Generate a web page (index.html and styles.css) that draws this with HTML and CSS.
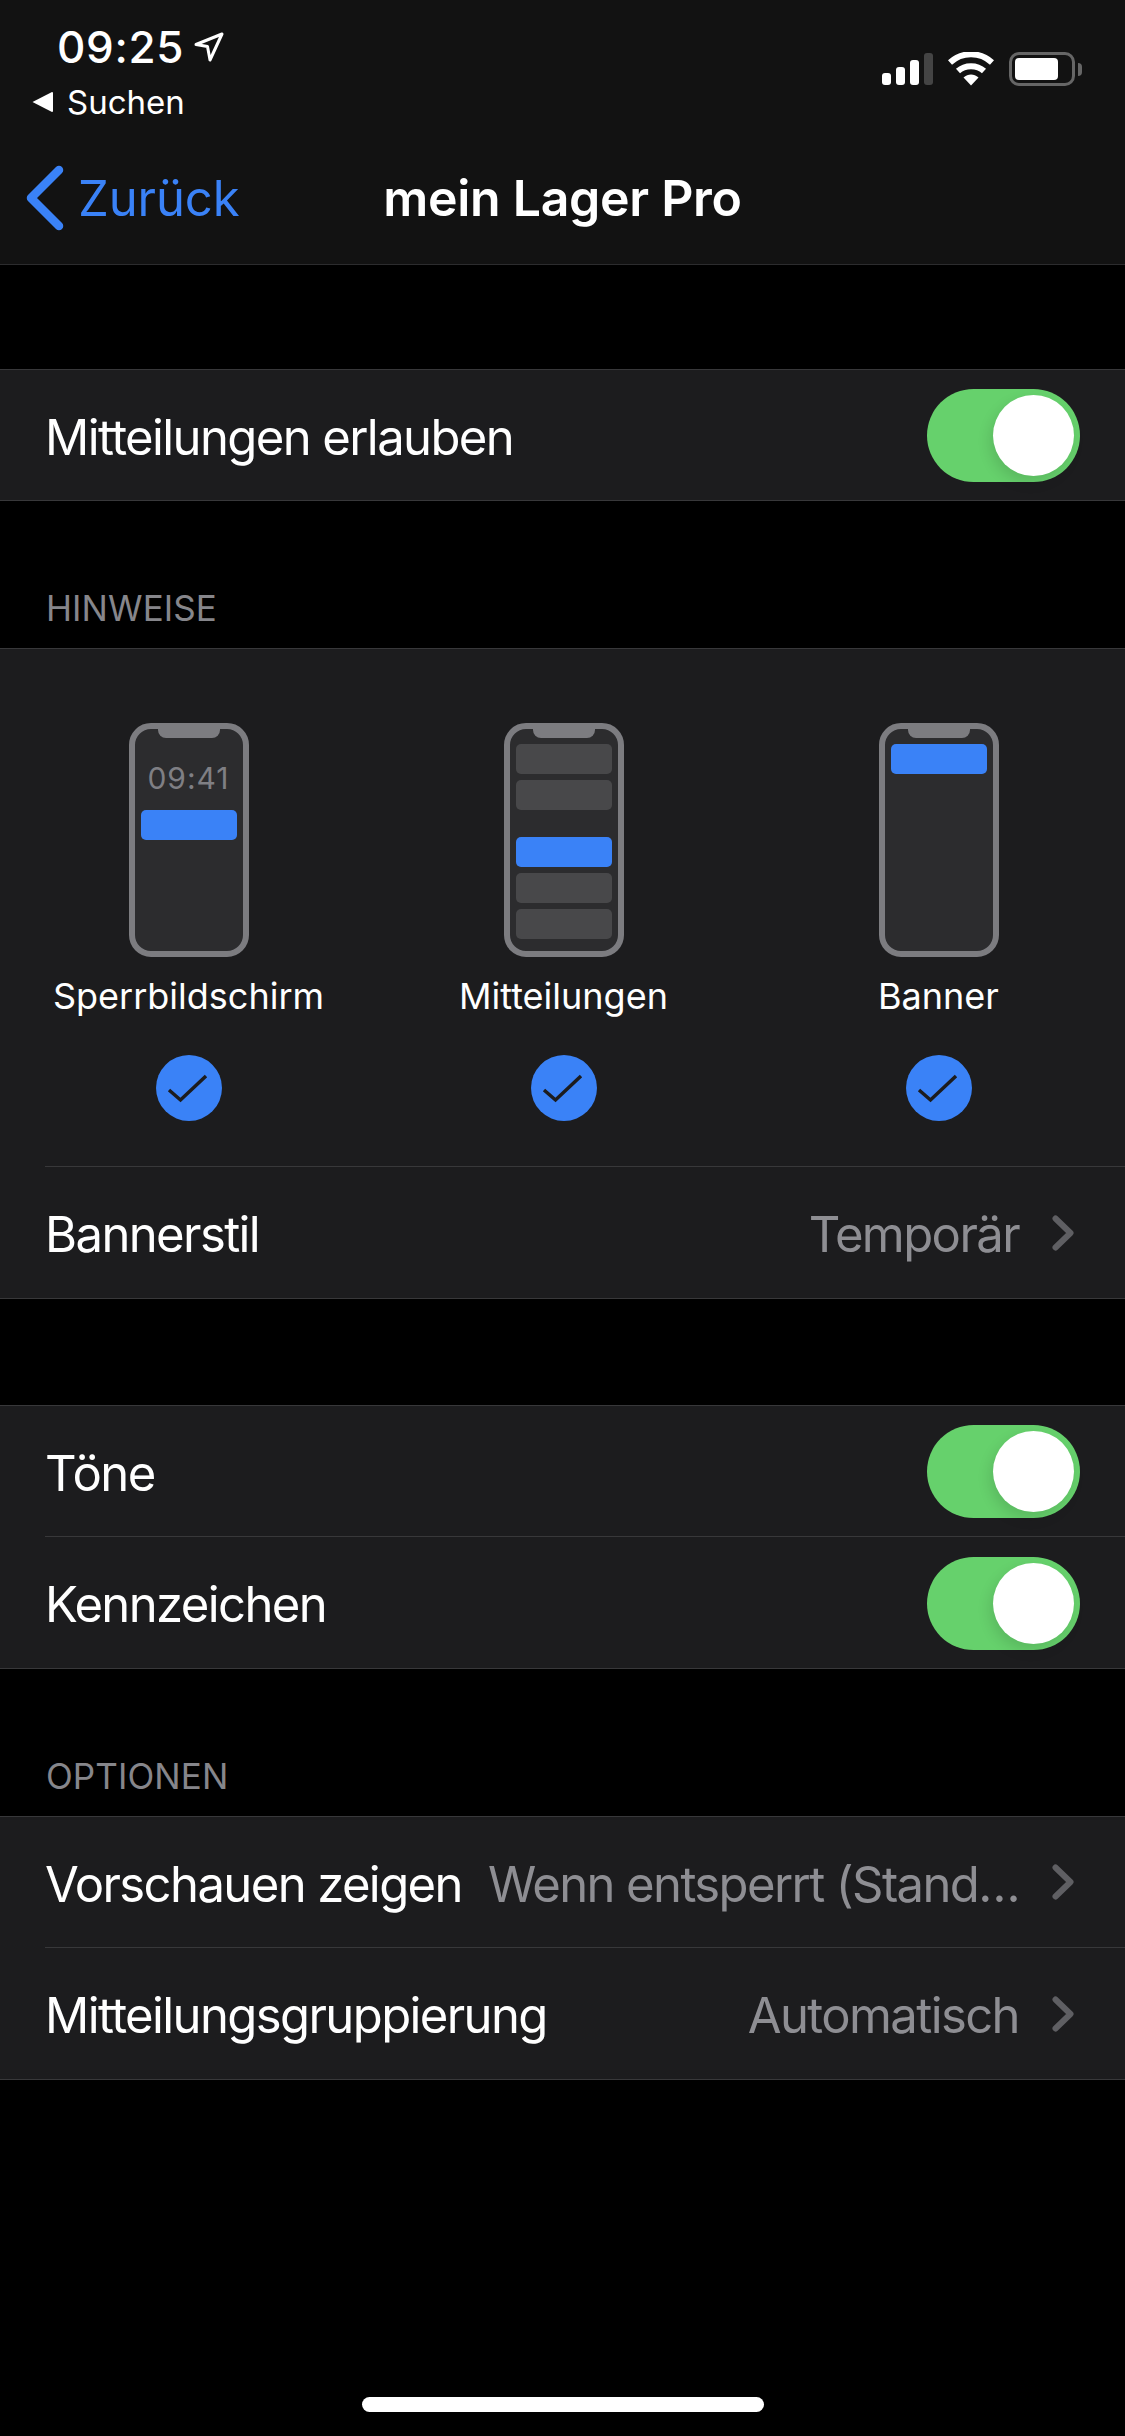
FILE: index.html
```html
<!DOCTYPE html>
<html lang="de">
<head>
  <meta charset="UTF-8">
  <title>mein Lager Pro</title>
  <link rel="stylesheet" href="styles.css">
</head>
<body>
  <header class="topbar">
    <div class="status">
      <div class="status-left">
        <div class="time-row">
          <span class="time">09:25</span>
          <svg class="loc" width="30" height="30" viewBox="0 0 30 30"><path d="M2 12.500 28 2 16 28 13.500 14.500Z" fill="none" stroke="#fff" stroke-width="3" stroke-linejoin="round"/></svg>
        </div>
        <div class="back-app">
          <svg width="21" height="22" viewBox="0 0 21 22"><path d="M0.5 11 20 1a1 1 0 0 1 1 1v18a1 1 0 0 1-1 1Z" fill="#fff"/></svg>
          <span>Suchen</span>
        </div>
      </div>
      <div class="status-right">
        <div class="signal">
          <i class="bar b1"></i><i class="bar b2"></i><i class="bar b3"></i><i class="bar b4"></i>
        </div>
        <svg class="wifi" width="46" height="34" viewBox="0 0 46 34">
          <path d="M2 10.500C14 -0.500 32 -0.500 44 10.500" fill="none" stroke="#fff" stroke-width="6"/>
          <path d="M10 19C17 12.500 29 12.500 36 19" fill="none" stroke="#fff" stroke-width="6"/>
          <path d="M15.500 25.500C20 21.500 26 21.500 30.500 25.500L23 33.500Z" fill="#fff"/>
        </svg>
        <div class="battery">
          <div class="battery-body"><div class="battery-fill"></div></div>
          <div class="battery-tip"></div>
        </div>
      </div>
    </div>
    <nav class="nav">
      <a class="nav-back">
        <svg width="38" height="66" viewBox="0 0 38 66"><path d="M33 5 5 33l28 28" fill="none" stroke="#3a82f7" stroke-width="8.500" stroke-linecap="round" stroke-linejoin="round"/></svg>
        <span>Zurück</span>
      </a>
      <h1 class="nav-title">mein Lager Pro</h1>
      <span></span>
    </nav>
  </header>

  <section class="group first">
    <div class="row"><div class="row-body">
      <span class="row-label">Mitteilungen erlauben</span>
      <div class="toggle"><div class="knob"></div></div>
    </div></div>
  </section>

  <h2 class="section-title">HINWEISE</h2>
  <section class="group">
    <div class="styles">
      <div class="style-col">
        <div class="phone">
          <div class="notch"></div>
          <div class="lock-time">09:41</div>
          <div class="card blue"></div>
        </div>
        <div class="style-label">Sperrbildschirm</div>
        <svg class="check" width="66" height="66" viewBox="0 0 66 66"><circle cx="33" cy="33" r="33" fill="#3a82f7"/><path d="M13 35 24.500 45 50 21" fill="none" stroke="#1c1c1e" stroke-width="3.500"/></svg>
      </div>
      <div class="style-col">
        <div class="phone phone-list">
          <div class="notch"></div>
          <div class="card"></div>
          <div class="card"></div>
          <div class="card blue spaced"></div>
          <div class="card"></div>
          <div class="card"></div>
        </div>
        <div class="style-label">Mitteilungen</div>
        <svg class="check" width="66" height="66" viewBox="0 0 66 66"><circle cx="33" cy="33" r="33" fill="#3a82f7"/><path d="M13 35 24.500 45 50 21" fill="none" stroke="#1c1c1e" stroke-width="3.500"/></svg>
      </div>
      <div class="style-col">
        <div class="phone phone-list">
          <div class="notch"></div>
          <div class="card blue"></div>
        </div>
        <div class="style-label">Banner</div>
        <svg class="check" width="66" height="66" viewBox="0 0 66 66"><circle cx="33" cy="33" r="33" fill="#3a82f7"/><path d="M13 35 24.500 45 50 21" fill="none" stroke="#1c1c1e" stroke-width="3.500"/></svg>
      </div>
    </div>
    <div class="row"><div class="row-body sep link">
      <span class="row-label">Bannerstil</span>
      <span class="row-value">Temporär</span>
      <svg class="chev" width="22" height="36" viewBox="0 0 22 36"><path d="M3.500 3.500 18.500 18 3.500 32.500" fill="none" stroke="#5f5f63" stroke-width="6" stroke-linecap="round" stroke-linejoin="round"/></svg>
    </div></div>
  </section>

  <div class="gap"></div>
  <section class="group">
    <div class="row"><div class="row-body">
      <span class="row-label">Töne</span>
      <div class="toggle"><div class="knob"></div></div>
    </div></div>
    <div class="row"><div class="row-body sep">
      <span class="row-label">Kennzeichen</span>
      <div class="toggle"><div class="knob"></div></div>
    </div></div>
  </section>

  <h2 class="section-title">OPTIONEN</h2>
  <section class="group">
    <div class="row"><div class="row-body link">
      <span class="row-label">Vorschauen zeigen</span>
      <span class="row-value">Wenn entsperrt (Stand…</span>
      <svg class="chev" width="22" height="36" viewBox="0 0 22 36"><path d="M3.500 3.500 18.500 18 3.500 32.500" fill="none" stroke="#5f5f63" stroke-width="6" stroke-linecap="round" stroke-linejoin="round"/></svg>
    </div></div>
    <div class="row"><div class="row-body sep link">
      <span class="row-label">Mitteilungsgruppierung</span>
      <span class="row-value">Automatisch</span>
      <svg class="chev" width="22" height="36" viewBox="0 0 22 36"><path d="M3.500 3.500 18.500 18 3.500 32.500" fill="none" stroke="#5f5f63" stroke-width="6" stroke-linecap="round" stroke-linejoin="round"/></svg>
    </div></div>
  </section>

  <div class="home-bar"></div>
</body>
</html>
```

FILE: styles.css
```css
* {
  box-sizing: border-box;
}

html {
  background: #000;
}

body {
  margin: 0;
  width: 1125px;
  height: 2436px;
  display: flex;
  flex-direction: column;
  overflow: hidden;
  background: #000;
  color: #fff;
  font-family: Inter, "Noto Sans", sans-serif;
}

/* top */
.topbar {
  height: 265px;
  flex: none;
  background: #121212;
  border-bottom: 1px solid #2c2c2e;
}

.status {
  height: 147px;
  display: flex;
  justify-content: space-between;
}

.status-left {
  padding: 25px 0 0 32px;
}

.time-row {
  display: flex;
  align-items: center;
  height: 44px;
  padding-left: 25px;
}

.time {
  font-size: 44px;
  font-weight: 500;
  letter-spacing: 0.7px;
  line-height: 44px;
}

.loc {
  margin-left: 10px;
}

.back-app {
  display: flex;
  align-items: center;
  height: 36px;
  margin-top: 15px;
  font-size: 33px;
  font-weight: 400;
  gap: 14px;
}

.status-right {
  display: flex;
  align-items: flex-start;
  padding: 52px 43px 0 0;
}

.signal {
  display: flex;
  align-items: flex-end;
  gap: 5px;
  height: 33px;
}

.bar {
  width: 9px;
  background: #fff;
  border-radius: 3px;
}

.b1 { height: 12px; }
.b2 { height: 18px; }
.b3 { height: 25px; }
.b4 { height: 32px; background: #444; }

.wifi {
  margin-left: 15px;
}

.battery {
  display: flex;
  align-items: center;
  margin-left: 15px;
  height: 34px;
}

.battery-body {
  width: 66px;
  height: 34px;
  border: 3px solid #666;
  border-radius: 10px;
  padding: 3px;
}

.battery-fill {
  width: 43px;
  height: 22px;
  background: #fff;
  border-radius: 4px;
}

.battery-tip {
  width: 4px;
  height: 13px;
  margin-left: 3px;
  background: #666;
  border-radius: 0 4px 4px 0;
}

.nav {
  height: 102px;
  display: grid;
  grid-template-columns: 1fr auto 1fr;
  align-items: center;
}

.nav-back {
  display: flex;
  align-items: center;
  padding-left: 26px;
  color: #3a82f7;
  font-size: 49px;
  letter-spacing: -0.1px;
  gap: 14px;
}

.nav-title {
  margin: 0;
  font-size: 50px;
  font-weight: 600;
  letter-spacing: -0.3px;
}

/* groups */
.group {
  flex: none;
  background: #1c1c1e;
  border-top: 1px solid #38383a;
  border-bottom: 1px solid #38383a;
}

.first {
  margin-top: 104px;
}

.gap {
  height: 106px;
  flex: none;
}

.section-title {
  flex: none;
  height: 147px;
  margin: 0;
  padding: 0 0 18px 46px;
  display: flex;
  align-items: flex-end;
  font-size: 35px;
  font-weight: 400;
  line-height: 44px;
  letter-spacing: 0.1px;
  color: #86868b;
}

.row {
  padding-left: 45px;
}

.row-body {
  height: 130px;
  display: flex;
  align-items: center;
  padding-right: 45px;
}

.row-body.sep {
  height: 132px;
  border-top: 1px solid #38383a;
}

.row-body.link {
  padding-right: 51px;
}

.row-label {
  flex: 1;
  padding-top: 4px;
  font-size: 49px;
  letter-spacing: -1.6px;
  white-space: nowrap;
}

.row-value {
  padding-top: 4px;
  font-size: 49px;
  letter-spacing: -1.6px;
  color: #8e8e93;
  white-space: nowrap;
}

.chev {
  margin-left: 33px;
}

/* switch */
.toggle {
  width: 153px;
  height: 93px;
  margin-top: 1px;
  padding: 6px;
  display: flex;
  justify-content: flex-end;
  background: #66d16c;
  border-radius: 47px;
}

.sep .toggle {
  margin-top: 2px;
}

.knob {
  width: 81px;
  height: 81px;
  background: #fff;
  border-radius: 50%;
  box-shadow: -3px 6px 14px rgba(0, 0, 0, 0.12);
}

/* alert styles */
.styles {
  display: grid;
  grid-template-columns: repeat(3, 375px);
  height: 517px;
  padding: 74px 0 0 1px;
}

.style-col {
  display: flex;
  flex-direction: column;
  align-items: center;
}

.phone {
  width: 120px;
  height: 234px;
  display: flex;
  flex-direction: column;
  align-items: center;
  padding: 0 6px;
  background: #2c2c2e;
  border: 6px solid #7c7c80;
  border-radius: 22px;
}

.notch {
  width: 62px;
  height: 9px;
  flex: none;
  background: #7c7c80;
  border-radius: 0 0 8px 8px;
}

.phone-list .notch {
  margin-bottom: 6px;
}

.lock-time {
  margin-top: 22px;
  height: 36px;
  font-size: 30px;
  line-height: 36px;
  letter-spacing: 1px;
  color: #7f7f84;
}

.card {
  width: 96px;
  height: 30px;
  flex: none;
  margin-bottom: 6px;
  background: #48484a;
  border-radius: 5px;
}

.card.blue {
  background: #3a82f7;
}

.phone .lock-time + .card {
  margin-top: 14px;
}

.card.spaced {
  margin-top: 21px;
}

.style-label {
  margin-top: 14px;
  height: 50px;
  font-size: 36px;
  line-height: 50px;
  white-space: nowrap;
}

.check {
  margin-top: 34px;
}

.home-bar {
  width: 402px;
  height: 15px;
  flex: none;
  margin: auto auto 24px;
  background: #fff;
  border-radius: 8px;
}
```
